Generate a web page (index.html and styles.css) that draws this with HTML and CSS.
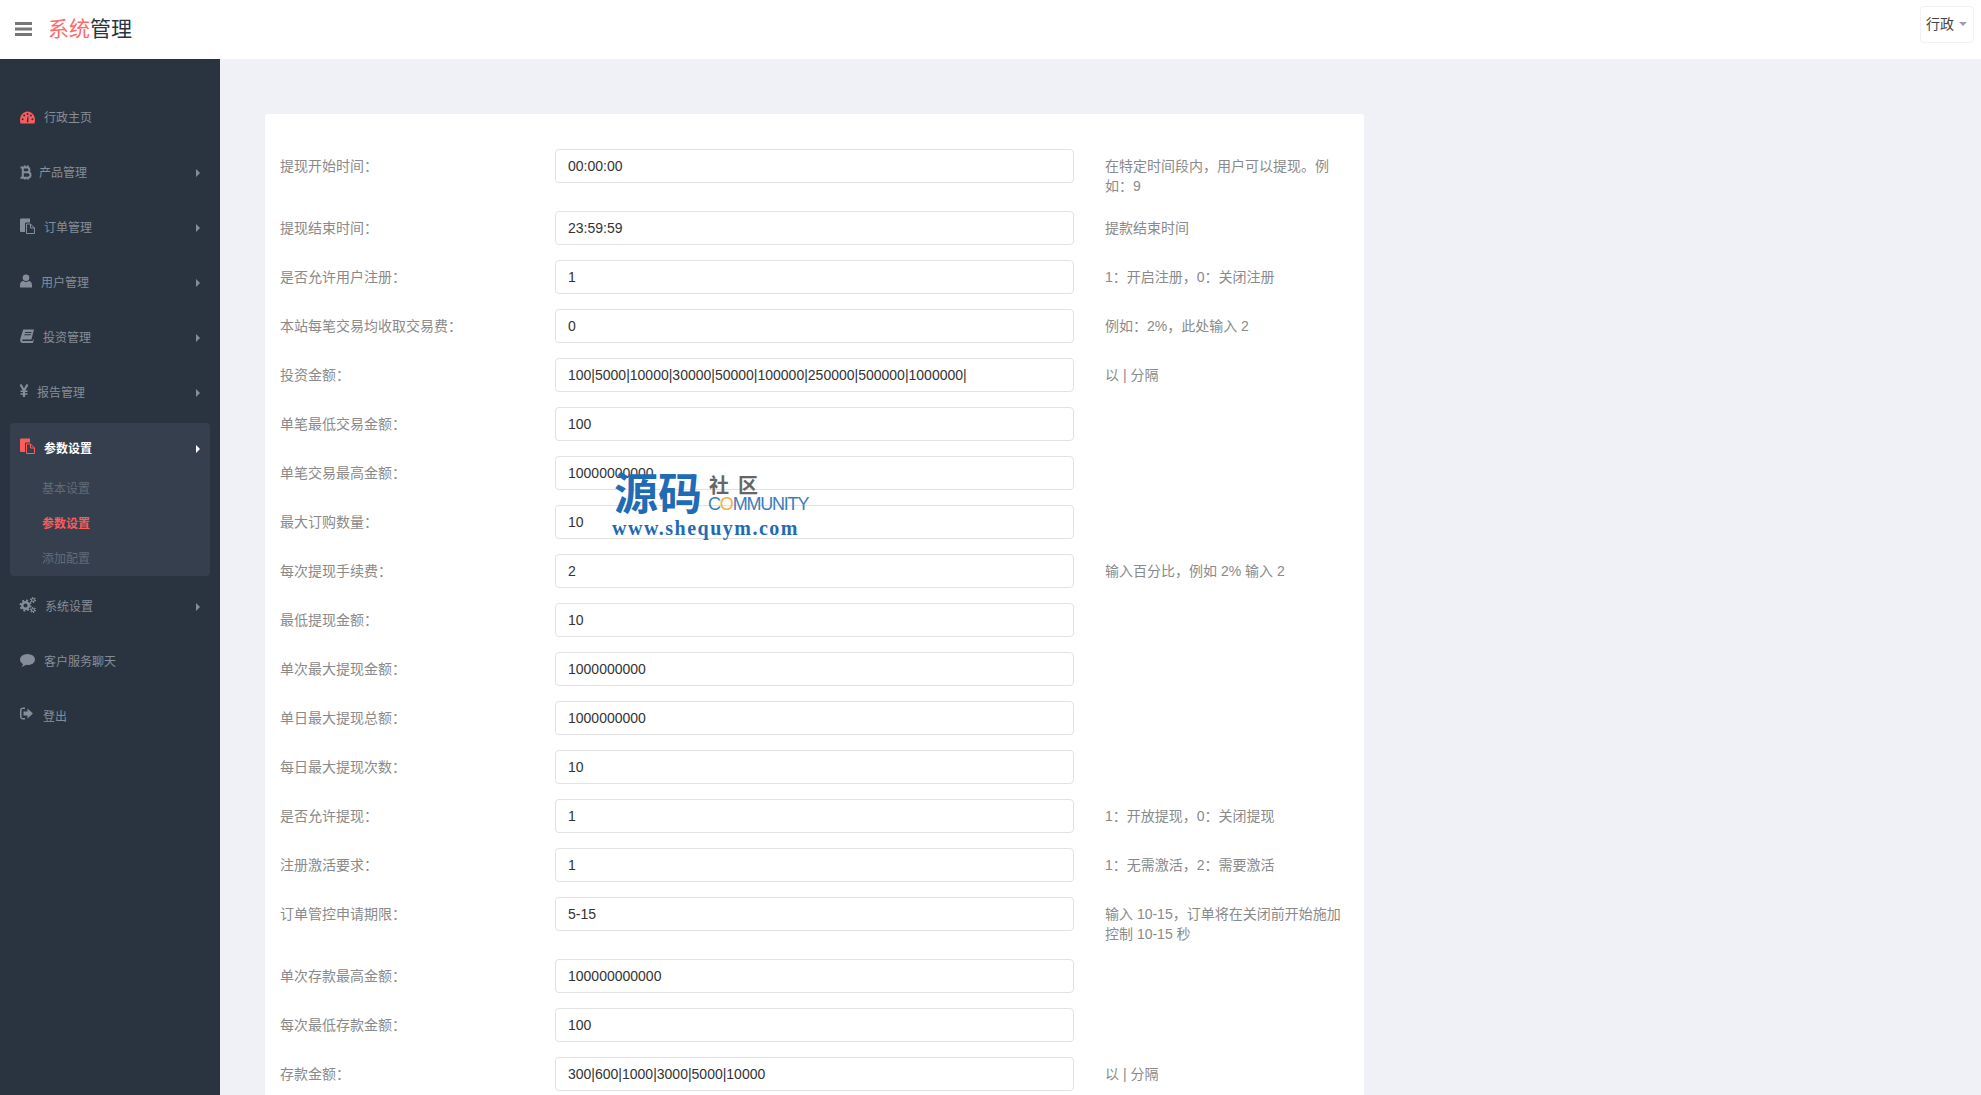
FILE: index.html
```html
<!DOCTYPE html>
<html>
  <head>
    <meta charset="utf-8">
    <title>系统管理</title>
    <link rel="stylesheet" href="styles.css">
  </head>
  <body>
    <header class="topbar">
      <svg class="burger" width="17" height="14" viewBox="0 0 17 14"><path d="M0 0h17v3H0zM0 5.500h17v3H0zM0 11h17v3H0z"/></svg>
      <div class="brand"><span class="brand-red">系统</span>管理</div>
      <div class="admin">行政<span class="admin-caret"></span></div>
    </header>
    <div class="layout">
      <aside class="sidebar">
        <a class="nav-item">
          <svg class="nav-icon icon-red" width="15" height="16" viewBox="0 0 15 16">
            <path d="M.7 14.500C.2 13.400 0 12.300 0 10.900 0 6.300 3.400 2.500 7.500 2.500S15 6.300 15 10.900c0 1.400-.2 2.500-.7 3.600z"/>
            <g class="dots"><circle cx="2.600" cy="10.200" r="1"/><circle cx="4.200" cy="6.400" r="1"/><circle cx="7.500" cy="4.900" r="1"/><circle cx="10.800" cy="6.400" r="1"/><circle cx="12.400" cy="10.200" r="1"/><path d="M6.700 12.800l1-5.500.8.100-.1 5.400a1 1 0 0 1-1.700 0z"/></g>
          </svg>
          行政主页
        </a>
        <a class="nav-item has-arrow">
          <svg class="nav-icon icon-line" width="10" height="16" viewBox="0 0 10 16"><path stroke-width="2" d="M.5 3.500H7a2.300 2.300 0 0 1 0 4.800H3M3 8.300h4.800a2.700 2.700 0 0 1 0 5.400H.5M2.800 3.500v10.200M4.800 1.500v2M7.800 1.500v2M4.800 13.700v1.800M7.800 13.700v1.800"/></svg>
          产品管理
        </a>
        <a class="nav-item has-arrow">
          <svg class="nav-icon" width="15" height="16" viewBox="0 0 15 16"><path d="M0 1C0 0 .5-.5 1.500-.5h8.500v4H6.500c-1 0-1.500.5-1.500 1.500v8H1.500C.5 13 0 12.500 0 11.500z"/><path class="page" d="M6.500 5h4l4 4v5.500h-8z"/><path class="page" d="M10.500 5v4h4"/></svg>
          订单管理
        </a>
        <a class="nav-item has-arrow">
          <svg class="nav-icon" width="12" height="16" viewBox="0 0 12 16"><circle cx="6" cy="3.800" r="3.300"/><path d="M0 13.500V11c0-2.500 1.500-4 3.500-4 .7.600 1.500.9 2.500.9s1.800-.3 2.500-.9c2 0 3.500 1.500 3.500 4v2.500z"/></svg>
          用户管理
        </a>
        <a class="nav-item has-arrow">
          <svg class="nav-icon" width="14" height="16" viewBox="0 0 14 16"><path d="M3.200.5H14l-2.600 10H3c-1.200 0-1.300 1.600 0 1.600h9.600l.6-1.900.7.300-1 3.500H2.200C.6 13.500-.2 12 .2 10.300zM5 3v1h6.300l.3-1zM4.400 5.300v1h6.300l.3-1z"/></svg>
          投资管理
        </a>
        <a class="nav-item has-arrow">
          <svg class="nav-icon icon-line" width="8" height="16" viewBox="0 0 8 16"><path stroke-width="2.200" d="M.5.500l3.500 6 3.500-6M4 6.500v6.500"/><path stroke-width="1.500" d="M.5 7.200h7M.5 9.900h7"/></svg>
          报告管理
        </a>
        <div class="nav-group">
          <a class="nav-item has-arrow is-open">
            <svg class="nav-icon icon-red" width="15" height="16" viewBox="0 0 15 16"><path d="M0 1C0 0 .5-.5 1.500-.5h8.500v4H6.500c-1 0-1.500.5-1.500 1.500v8H1.500C.5 13 0 12.500 0 11.500z"/><path class="page" d="M6.500 5h4l4 4v5.500h-8z"/><path class="page" d="M10.500 5v4h4"/></svg>
            参数设置
          </a>
          <a class="sub-item">基本设置</a>
          <a class="sub-item is-current">参数设置</a>
          <a class="sub-item">添加配置</a>
        </div>
        <a class="nav-item has-arrow">
          <svg class="nav-icon" width="16" height="16" viewBox="0 0 16 16">
            <g class="cogs"><circle cx="5.500" cy="7.500" r="3.300" stroke-width="2.400"/><circle cx="5.500" cy="7.500" r="5.100" stroke-width="1.800" stroke-dasharray="2 2"/><circle cx="13" cy="2" r="1.500" stroke-width="1.200"/><circle cx="13" cy="2" r="2.500" stroke-width="1.200" stroke-dasharray="1.300 1.300"/><circle cx="13" cy="12" r="1.500" stroke-width="1.200"/><circle cx="13" cy="12" r="2.500" stroke-width="1.200" stroke-dasharray="1.300 1.300"/></g>
          </svg>
          系统设置
        </a>
        <a class="nav-item">
          <svg class="nav-icon" width="15" height="16" viewBox="0 0 15 16"><ellipse cx="7.500" cy="6.500" rx="7.500" ry="5.500"/><path d="M3.500 10.500l-2 3.500 5-2.200z"/></svg>
          客户服务聊天
        </a>
        <a class="nav-item">
          <svg class="nav-icon" width="14" height="16" viewBox="0 0 14 16"><path d="M5 -.5H3C1.200-.5 0 .7 0 2.500v6c0 1.800 1.200 3 3 3h2V10H3C2 10 1.500 9.500 1.500 8.500v-6C1.500 1.500 2 1 3 1h2z"/><path d="M3.500 3.500h4V.5L13 5.500l-5.500 5V7.500h-4z"/></svg>
          登出
        </a>
      </aside>
      <main class="content">
        <form class="card">
          <label class="field-label">提现开始时间：</label>
          <input class="field-input" value="00:00:00">
          <p class="field-help">在特定时间段内，用户可以提现。例如：9</p>

          <label class="field-label">提现结束时间：</label>
          <input class="field-input" value="23:59:59">
          <p class="field-help">提款结束时间</p>

          <label class="field-label">是否允许用户注册：</label>
          <input class="field-input" value="1">
          <p class="field-help">1：开启注册，0：关闭注册</p>

          <label class="field-label">本站每笔交易均收取交易费：</label>
          <input class="field-input" value="0">
          <p class="field-help">例如：2%，此处输入 2</p>

          <label class="field-label">投资金额：</label>
          <input class="field-input" value="100|5000|10000|30000|50000|100000|250000|500000|1000000|">
          <p class="field-help">以 | 分隔</p>

          <label class="field-label">单笔最低交易金额：</label>
          <input class="field-input" value="100">
          <p class="field-help"></p>

          <label class="field-label">单笔交易最高金额：</label>
          <input class="field-input" value="10000000000">
          <p class="field-help"></p>

          <label class="field-label">最大订购数量：</label>
          <input class="field-input" value="10">
          <p class="field-help"></p>

          <label class="field-label">每次提现手续费：</label>
          <input class="field-input" value="2">
          <p class="field-help">输入百分比，例如 2% 输入 2</p>

          <label class="field-label">最低提现金额：</label>
          <input class="field-input" value="10">
          <p class="field-help"></p>

          <label class="field-label">单次最大提现金额：</label>
          <input class="field-input" value="1000000000">
          <p class="field-help"></p>

          <label class="field-label">单日最大提现总额：</label>
          <input class="field-input" value="1000000000">
          <p class="field-help"></p>

          <label class="field-label">每日最大提现次数：</label>
          <input class="field-input" value="10">
          <p class="field-help"></p>

          <label class="field-label">是否允许提现：</label>
          <input class="field-input" value="1">
          <p class="field-help">1：开放提现，0：关闭提现</p>

          <label class="field-label">注册激活要求：</label>
          <input class="field-input" value="1">
          <p class="field-help">1：无需激活，2：需要激活</p>

          <label class="field-label">订单管控申请期限：</label>
          <input class="field-input" value="5-15">
          <p class="field-help">输入 10-15，订单将在关闭前开始施加控制 10-15 秒</p>

          <label class="field-label">单次存款最高金额：</label>
          <input class="field-input" value="100000000000">
          <p class="field-help"></p>

          <label class="field-label">每次最低存款金额：</label>
          <input class="field-input" value="100">
          <p class="field-help"></p>

          <label class="field-label">存款金额：</label>
          <input class="field-input" value="300|600|1000|3000|5000|10000">
          <p class="field-help">以 | 分隔</p>
        </form>
      </main>
    </div>
    <div class="watermark">
      <span class="wm-big">源码</span>
      <span class="wm-small">社区</span>
      <span class="wm-community">C<span class="wm-o">O</span>MMUNITY</span>
      <span class="wm-url">www.shequym.com</span>
    </div>
  </body>
</html>
```

FILE: styles.css
```css
html, body {
  height: 100%;
  margin: 0;
  overflow: hidden;
}
body {
  position: relative;
  background-color: #eff1f6;
  color: #333;
  font-family: "Liberation Sans", "Noto Sans CJK SC", sans-serif;
  font-size: 14px;
}

.topbar {
  display: flex;
  align-items: center;
  height: 59px;
  padding: 0 7px 0 15px;
  box-sizing: border-box;
  background-color: #fff;
}
  .burger {
    fill: #777;
    margin-right: 16px;
    margin-bottom: 1px;
  }
  .brand {
    flex: 1;
    margin-bottom: 5px;
    font-size: 21px;
    color: #2a3441;
  }
  .brand-red {
    color: #ff6b6b;
  }
  .admin {
    display: flex;
    align-items: center;
    align-self: flex-start;
    height: 37px;
    margin-top: 6px;
    padding: 0 6px 3px 5px;
    box-sizing: border-box;
    border: 1px solid #eff1f6;
    border-radius: 4px;
    color: #444;
  }
  .admin-caret {
    width: 0;
    height: 0;
    margin-left: 5px;
    margin-top: 2px;
    border-top: 4px solid #9a9fb0;
    border-left: 4px solid transparent;
    border-right: 4px solid transparent;
  }

.layout {
  display: flex;
  height: calc(100% - 59px);
}

.sidebar {
  flex: none;
  width: 220px;
  padding-top: 31px;
  box-sizing: border-box;
  background-color: #2a3441;
  font-size: 12px;
}
  .nav-item {
    display: flex;
    align-items: center;
    height: 55px;
    padding: 0 0 2px 20px;
    box-sizing: border-box;
    color: #858d98;
    position: relative;
  }
  .nav-icon {
    flex: none;
    margin-right: 9px;
    overflow: visible;
    fill: #858d98;
  }
  .icon-red {
    fill: #fb5c5c;
  }
  .icon-line {
    fill: none;
    stroke: #858d98;
  }
  .dots {
    fill: #2a3441;
  }
  .page {
    fill: none;
    stroke: #858d98;
    stroke-width: 1;
  }
  .icon-red .page {
    stroke: #fb5c5c;
  }
  .cogs {
    fill: none;
    stroke: #858d98;
  }
  .has-arrow::after {
    content: "";
    position: absolute;
    right: 20px;
    top: 50%;
    margin-top: -4px;
    border-left: 4px solid #858d98;
    border-top: 4px solid transparent;
    border-bottom: 4px solid transparent;
  }
  .nav-group {
    margin: 3px 10px;
    padding-bottom: 1px;
    border-radius: 4px;
    background-color: #363f4d;
  }
  .nav-item.is-open {
    height: 47px;
    padding: 1px 0 0 10px;
    color: #fff;
    font-weight: bold;
  }
  .is-open.has-arrow::after {
    right: 10px;
    margin-top: -2px;
    border-left-color: #fff;
  }
  .sub-item {
    display: block;
    height: 35px;
    line-height: 38px;
    padding-left: 32px;
    color: #626b78;
  }
  .sub-item.is-current {
    color: #fb5c5c;
    font-weight: bold;
  }

.content {
  flex: 1;
  padding: 55px 45px 0;
  min-width: 0;
}
.card {
  display: grid;
  grid-template-columns: 260px 519px 252px;
  column-gap: 15px;
  row-gap: 15px;
  align-items: start;
  width: 1099px;
  padding: 35px 15px 30px;
  box-sizing: border-box;
  border-radius: 3px;
  background-color: #fff;
}
  .field-label {
    padding-top: 7px;
    line-height: 20px;
    color: #8a8a8a;
  }
  .field-input {
    width: 100%;
    height: 34px;
    padding: 0 12px;
    box-sizing: border-box;
    border: 1px solid #e2e2e2;
    border-radius: 4px;
    background-color: #fff;
    color: #333;
    font-family: inherit;
    font-size: 14px;
  }
  .field-help {
    margin: 0 0 0 16px;
    padding-top: 7px;
    line-height: 20px;
    color: #8a8a8a;
  }

.watermark {
  position: absolute;
  left: 612px;
  top: 470px;
  width: 200px;
  height: 72px;
}
  .watermark span {
    position: absolute;
    white-space: nowrap;
  }
  .wm-big {
    left: 2px;
    top: -11px;
    font-size: 44px;
    font-weight: bold;
    color: #1f6bb5;
  }
  .wm-small {
    left: 97px;
    top: 0;
    font-size: 20px;
    font-weight: bold;
    letter-spacing: 9px;
    color: #666;
  }
  .wm-community {
    left: 96px;
    top: 24px;
    font-size: 18px;
    letter-spacing: -1.200px;
    color: #3d7dbb;
  }
  .watermark .wm-o {
    position: static;
    color: #f2b13c;
  }
  .wm-url {
    left: 0;
    top: 47px;
    font-family: "Liberation Serif", serif;
    font-size: 20px;
    font-weight: bold;
    letter-spacing: 1.500px;
    color: #1f6bb5;
  }
```
